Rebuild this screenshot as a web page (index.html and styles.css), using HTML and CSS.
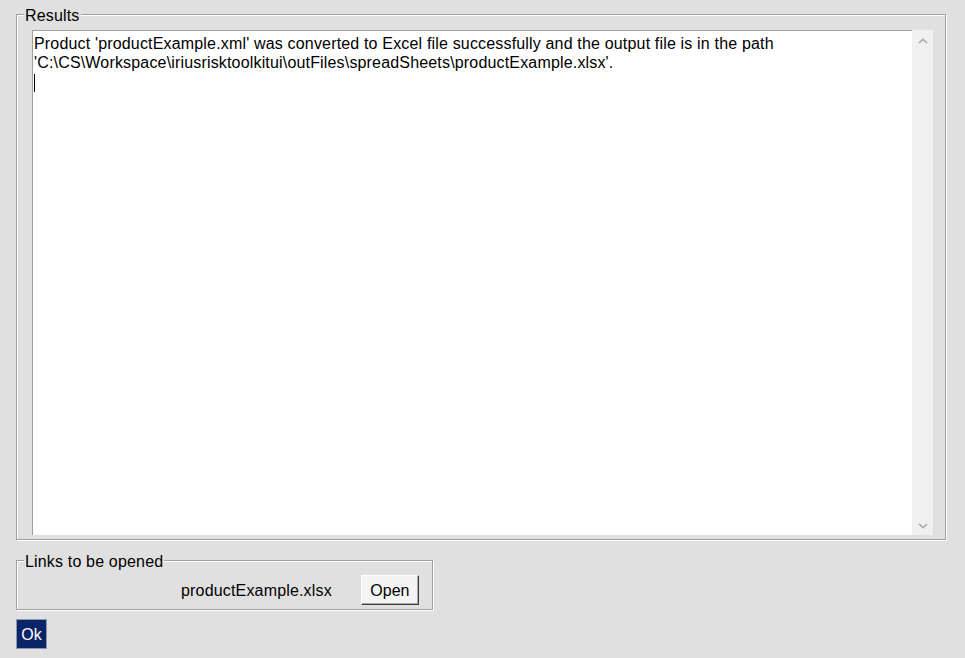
FILE: index.html
```html
<!DOCTYPE html>
<html>
<head>
<meta charset="utf-8">
<link rel="stylesheet" href="styles.css">
</head>
<body>
<div class="window">
  <div class="frame results">
    <span class="legend">Results</span>
    <div class="text-row">
      <div class="text">
        <div class="content">Product 'productExample.xml' was converted to Excel file successfully and the output file is in the path 'C:\CS\Workspace\iriusrisktoolkitui\outFiles\spreadSheets\productExample.xlsx'.</div>
        <div class="caret"></div>
      </div>
      <div class="scrollbar">
        <svg class="arrow" width="10" height="6" viewBox="0 0 10 6"><path d="M1 5 L5 1.3 L9 5" stroke="#ababab" stroke-width="1.7" fill="none"/></svg>
        <svg class="arrow" width="10" height="6" viewBox="0 0 10 6"><path d="M1 1 L5 4.7 L9 1" stroke="#ababab" stroke-width="1.7" fill="none"/></svg>
      </div>
    </div>
  </div>
  <div class="frame links">
    <span class="legend">Links to be opened</span>
    <div class="links-row">
      <span class="link-name">productExample.xlsx</span>
      <button class="btn">Open</button>
    </div>
  </div>
  <button class="ok">Ok</button>
</div>
</body>
</html>
```

FILE: styles.css
```css
* { box-sizing: border-box; }
html, body { margin: 0; background: #e0e0e0; }
body {
  font-family: "Liberation Sans", Arial, sans-serif;
  font-size: 16px;
  line-height: 19px;
  letter-spacing: 0.17px;
  color: #000;
}
.window { padding: 14px 0 0 16px; }
.frame {
  position: relative;
  border: 1px solid #a0a0a0;
  box-shadow: inset 1px 1px 0 #fff, 1px 1px 0 #fff;
}
.legend {
  position: absolute;
  left: 7px;
  top: -9px;
  background: #e0e0e0;
  padding: 0 1px 0 1px;
  line-height: 19px;
  white-space: nowrap;
}
.results {
  width: 930px;
  padding: 15px 12px 4px 15px;
}
.text-row { display: flex; height: 505px; }
.text {
  width: 880px;
  height: 505px;
  background: #fff;
  border-top: 1px solid #a0a0a0;
  border-left: 1px solid #a0a0a0;
  padding: 3px 4px 0 1px;
}
.caret { width: 1px; height: 18px; margin-top: 2px; background: #000; }
.scrollbar {
  width: 21px;
  height: 505px;
  background: #f0f0f0;
  display: flex;
  flex-direction: column;
  justify-content: space-between;
  align-items: center;
  padding: 8px 0 6px 0;
}
.arrow { display: block; }
.links {
  margin-top: 20px;
  width: 417px;
  padding: 14px 0 4px 0;
}
.links-row {
  display: flex;
  align-items: center;
  padding-left: 164px;
  height: 30px;
}
.link-name { margin-right: 29px; white-space: nowrap; }
.btn {
  font: inherit;
  color: #000;
  width: 58px;
  height: 30px;
  padding: 0;
  background: #f4f4f4;
  border: 1px solid;
  border-color: #ffffff #3c3c3c #3c3c3c #ffffff;
  box-shadow: inset -1px -1px 0 #a8a8a8;
  text-align: center;
}
.ok {
  display: block;
  margin-top: 9px;
  width: 31px;
  height: 30px;
  padding: 0;
  font: inherit;
  color: #fff;
  background: #0a2468;
  border: 1px solid #8d96ae;
  text-align: center;
}
```
